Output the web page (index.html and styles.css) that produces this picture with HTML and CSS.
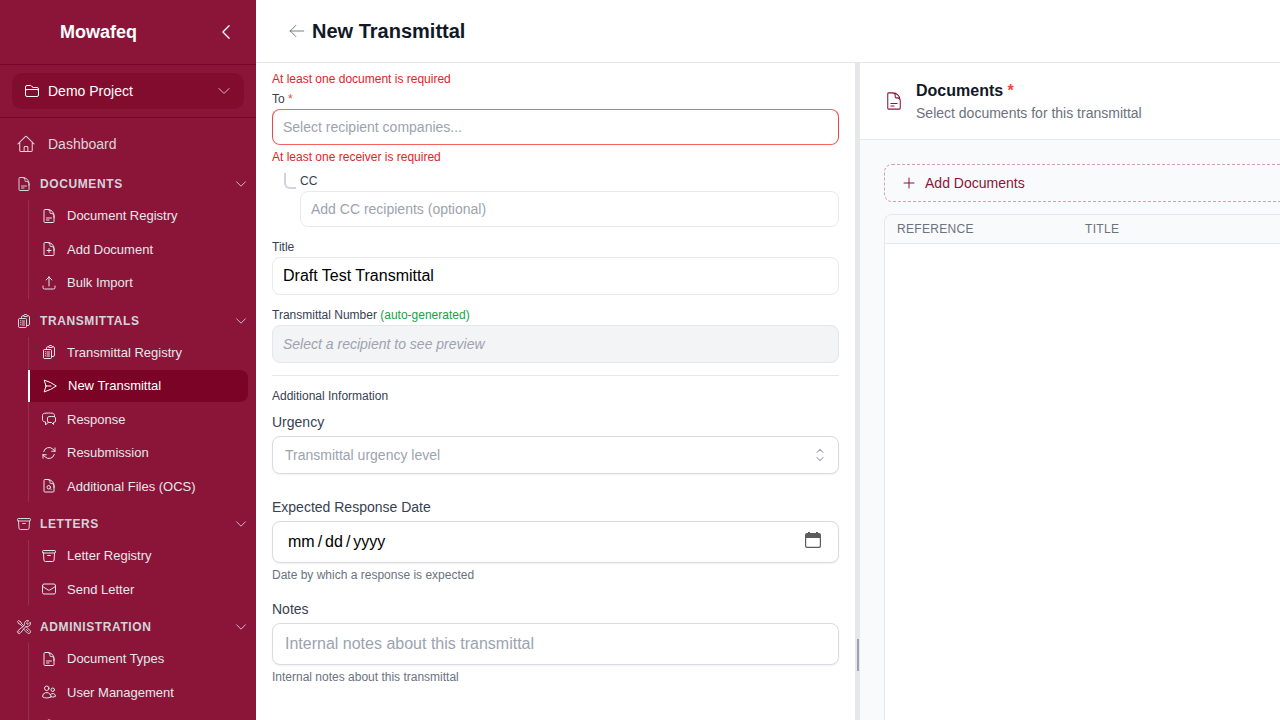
FILE: index.html
```html
<!DOCTYPE html>
<html lang="en">
<head>
<meta charset="utf-8">
<meta name="viewport" content="width=device-width, initial-scale=1">
<title>New Transmittal</title>
<link rel="stylesheet" href="styles.css">
</head>
<body>
<svg class="sprite" aria-hidden="true">
  <symbol id="chevron-left" viewBox="0 0 24 24"><path d="M15.75 19.5 8.25 12l7.5-7.5"/></symbol>
  <symbol id="chevron-down" viewBox="0 0 24 24"><path d="m19.5 8.25-7.5 7.5-7.5-7.5"/></symbol>
  <symbol id="chevron-up-down" viewBox="0 0 24 24"><path d="M8.25 15 12 18.75 15.75 15m-7.5-6L12 5.25 15.75 9"/></symbol>
  <symbol id="arrow-left" viewBox="0 0 24 24"><path d="M10.5 19.5 3 12m0 0 7.5-7.5M3 12h18"/></symbol>
  <symbol id="plus" viewBox="0 0 24 24"><path d="M12 4.5v15m7.5-7.5h-15"/></symbol>
  <symbol id="folder" viewBox="0 0 24 24"><path d="M2.25 12.75V12A2.25 2.25 0 0 1 4.5 9.75h15A2.25 2.25 0 0 1 21.75 12v.75m-8.69-6.44-2.12-2.12a1.5 1.5 0 0 0-1.061-.44H4.5A2.25 2.25 0 0 0 2.25 6v12a2.25 2.25 0 0 0 2.25 2.25h15A2.25 2.25 0 0 0 21.75 18V9a2.25 2.25 0 0 0-2.25-2.25h-5.379a1.5 1.5 0 0 1-1.06-.44Z"/></symbol>
  <symbol id="home" viewBox="0 0 24 24"><path d="m2.25 12 8.954-8.955c.44-.439 1.152-.439 1.591 0L21.75 12M4.5 9.75v10.125c0 .621.504 1.125 1.125 1.125H9.75v-4.875c0-.621.504-1.125 1.125-1.125h2.25c.621 0 1.125.504 1.125 1.125V21h4.125c.621 0 1.125-.504 1.125-1.125V9.75M8.25 21h8.25"/></symbol>
  <symbol id="document-text" viewBox="0 0 24 24"><path d="M19.5 14.25v-2.625a3.375 3.375 0 0 0-3.375-3.375h-1.5A1.125 1.125 0 0 1 13.5 7.125v-1.5a3.375 3.375 0 0 0-3.375-3.375H8.25m0 12.75h7.5m-7.5 3H12M10.5 2.25H5.625c-.621 0-1.125.504-1.125 1.125v17.25c0 .621.504 1.125 1.125 1.125h12.75c.621 0 1.125-.504 1.125-1.125V11.25a9 9 0 0 0-9-9Z"/></symbol>
  <symbol id="document-plus" viewBox="0 0 24 24"><path d="M19.5 14.25v-2.625a3.375 3.375 0 0 0-3.375-3.375h-1.5A1.125 1.125 0 0 1 13.5 7.125v-1.5a3.375 3.375 0 0 0-3.375-3.375H8.25m3.75 9v6m3-3H9m1.5-12H5.625c-.621 0-1.125.504-1.125 1.125v17.25c0 .621.504 1.125 1.125 1.125h12.75c.621 0 1.125-.504 1.125-1.125V11.25a9 9 0 0 0-9-9Z"/></symbol>
  <symbol id="document-search" viewBox="0 0 24 24"><path d="M19.5 14.25v-2.625a3.375 3.375 0 0 0-3.375-3.375h-1.5A1.125 1.125 0 0 1 13.5 7.125v-1.5a3.375 3.375 0 0 0-3.375-3.375H8.25m5.231 13.481L15 17.25m-4.5-15H5.625c-.621 0-1.125.504-1.125 1.125v16.5c0 .621.504 1.125 1.125 1.125h12.75c.621 0 1.125-.504 1.125-1.125V11.25a9 9 0 0 0-9-9Zm3.75 11.625a2.625 2.625 0 1 1-5.25 0 2.625 2.625 0 0 1 5.25 0Z"/></symbol>
  <symbol id="arrow-up-tray" viewBox="0 0 24 24"><path d="M3 16.5v2.25A2.25 2.25 0 0 0 5.25 21h13.5A2.25 2.25 0 0 0 21 18.75V16.5m-13.5-9L12 3m0 0 4.5 4.5M12 3v13.5"/></symbol>
  <symbol id="clipboard-list" viewBox="0 0 24 24"><path d="M9 12h3.75M9 15h3.75M9 18h3.75m3 .75H18a2.25 2.25 0 0 0 2.25-2.25V6.108c0-1.135-.845-2.098-1.976-2.192a48.424 48.424 0 0 0-1.123-.08m-5.801 0c-.065.21-.1.433-.1.664 0 .414.336.75.75.75h4.5a.75.75 0 0 0 .75-.75 2.25 2.25 0 0 0-.1-.664m-5.8 0A2.251 2.251 0 0 1 13.5 2.25H15c1.012 0 1.867.668 2.15 1.586m-5.8 0c-.376.023-.75.05-1.124.08C9.095 4.01 8.25 4.973 8.25 6.108V8.25m0 0H4.875c-.621 0-1.125.504-1.125 1.125v11.25c0 .621.504 1.125 1.125 1.125h9.75c.621 0 1.125-.504 1.125-1.125V9.375c0-.621-.504-1.125-1.125-1.125H8.25ZM6.75 12h.008v.008H6.75V12Zm0 3h.008v.008H6.75V15Zm0 3h.008v.008H6.75V18Z"/></symbol>
  <symbol id="paper-airplane" viewBox="0 0 24 24"><path d="M6 12 3.269 3.125A59.769 59.769 0 0 1 21.485 12 59.768 59.768 0 0 1 3.27 20.875L5.999 12Zm0 0h7.5"/></symbol>
  <symbol id="chat" viewBox="0 0 24 24"><path d="M20.25 8.511c.884.284 1.5 1.128 1.5 2.097v4.286c0 1.136-.847 2.1-1.98 2.193-.34.027-.68.052-1.02.072v3.091l-3-3c-1.354 0-2.694-.055-4.02-.163a2.115 2.115 0 0 1-.825-.242m9.345-8.334a2.126 2.126 0 0 0-.476-.095 48.64 48.64 0 0 0-8.048 0c-1.131.094-1.976 1.057-1.976 2.192v4.286c0 .837.46 1.58 1.155 1.951m9.345-8.334V6.637c0-1.621-1.152-3.026-2.76-3.235A48.455 48.455 0 0 0 11.25 3c-2.115 0-4.198.137-6.24.402-1.608.209-2.76 1.614-2.76 3.235v6.226c0 1.621 1.152 3.026 2.76 3.235.577.075 1.157.14 1.74.194V21l4.155-4.155"/></symbol>
  <symbol id="arrow-path" viewBox="0 0 24 24"><path d="M16.023 9.348h4.992v-.001M2.985 19.644v-4.992m0 0h4.992m-4.993 0 3.181 3.183a8.25 8.25 0 0 0 13.803-3.7M4.031 9.865a8.25 8.25 0 0 1 13.803-3.7l3.181 3.182m0-4.991v4.99"/></symbol>
  <symbol id="archive-box" viewBox="0 0 24 24"><path d="m20.25 7.5-.625 10.632a2.25 2.25 0 0 1-2.247 2.118H6.622a2.25 2.25 0 0 1-2.247-2.118L3.75 7.5M10 11.25h4M3.375 7.5h17.25c.621 0 1.125-.504 1.125-1.125v-1.5c0-.621-.504-1.125-1.125-1.125H3.375c-.621 0-1.125.504-1.125 1.125v1.5c0 .621.504 1.125 1.125 1.125Z"/></symbol>
  <symbol id="envelope" viewBox="0 0 24 24"><path d="M21.75 6.75v10.5a2.25 2.25 0 0 1-2.25 2.25h-15a2.25 2.25 0 0 1-2.25-2.25V6.75m19.5 0A2.25 2.25 0 0 0 19.5 4.5h-15a2.25 2.25 0 0 0-2.25 2.25m19.5 0v.243a2.25 2.25 0 0 1-1.07 1.916l-7.5 4.615a2.25 2.25 0 0 1-2.36 0L3.32 8.91a2.25 2.25 0 0 1-1.07-1.916V6.75"/></symbol>
  <symbol id="tools" viewBox="0 0 24 24"><path d="M11.42 15.17 17.25 21A2.652 2.652 0 0 0 21 17.25l-5.877-5.877M11.42 15.17l2.496-3.03c.317-.384.74-.626 1.208-.766M11.42 15.17l-4.655 5.653a2.548 2.548 0 1 1-3.586-3.586l6.837-5.63m5.108-.233c.55-.164 1.163-.188 1.743-.14a4.5 4.5 0 0 0 4.486-6.336l-3.276 3.277a3.004 3.004 0 0 1-2.25-2.25l3.276-3.276a4.5 4.5 0 0 0-6.336 4.486c.091 1.076-.071 2.264-.904 2.95l-.102.085m-1.745 1.437L5.909 7.5H4.5L2.25 3.75l1.5-1.5L7.5 4.5v1.409l4.26 4.26m-1.745 1.437 1.745-1.437m6.615 8.206L15.75 15.75M4.867 19.125h.008v.008h-.008v-.008Z"/></symbol>
  <symbol id="users" viewBox="0 0 24 24"><path d="M15 19.128a9.38 9.38 0 0 0 2.625.372 9.337 9.337 0 0 0 4.121-.952 4.125 4.125 0 0 0-7.533-2.493M15 19.128v-.003c0-1.113-.285-2.16-.786-3.07M15 19.128v.106A12.318 12.318 0 0 1 8.624 21c-2.331 0-4.512-.645-6.374-1.766l-.001-.109a6.375 6.375 0 0 1 11.964-3.07M12 6.375a3.375 3.375 0 1 1-6.75 0 3.375 3.375 0 0 1 6.75 0Zm8.25 2.25a2.625 2.625 0 1 1-5.25 0 2.625 2.625 0 0 1 5.25 0Z"/></symbol>
  <symbol id="cog" viewBox="0 0 24 24"><path d="M9.594 3.94c.09-.542.56-.94 1.11-.94h2.593c.55 0 1.02.398 1.11.94l.213 1.281c.063.374.313.686.645.87.074.04.147.083.22.127.325.196.72.257 1.075.124l1.217-.456a1.125 1.125 0 0 1 1.37.49l1.296 2.247a1.125 1.125 0 0 1-.26 1.431l-1.003.827c-.293.241-.438.613-.43.992a7.723 7.723 0 0 1 0 .255c-.008.378.137.75.43.991l1.004.827c.424.35.534.955.26 1.43l-1.298 2.247a1.125 1.125 0 0 1-1.369.491l-1.217-.456c-.355-.133-.75-.072-1.076.124a6.47 6.47 0 0 1-.22.128c-.331.183-.581.495-.644.869l-.213 1.281c-.09.543-.56.94-1.11.94h-2.594c-.55 0-1.019-.398-1.11-.94l-.213-1.281c-.062-.374-.312-.686-.644-.87a6.52 6.52 0 0 1-.22-.127c-.325-.196-.72-.257-1.076-.124l-1.217.456a1.125 1.125 0 0 1-1.369-.49l-1.297-2.247a1.125 1.125 0 0 1 .26-1.431l1.004-.827c.292-.24.437-.613.43-.991a6.932 6.932 0 0 1 0-.255c.007-.38-.138-.751-.43-.992l-1.004-.827a1.125 1.125 0 0 1-.26-1.43l1.297-2.247a1.125 1.125 0 0 1 1.37-.491l1.216.456c.356.133.751.072 1.076-.124.072-.044.146-.086.22-.128.332-.183.582-.495.644-.869l.214-1.28Z"/></symbol>
</svg>
<div class="app">
  <aside class="sidebar">
    <div class="brand">
      <span class="brand-name">Mowafeq</span>
      <button class="icon-button" type="button" aria-label="Collapse sidebar"><svg class="icon icon-lg"><use href="#chevron-left"/></svg></button>
    </div>
    <div class="project">
      <button class="project-button" type="button">
        <svg class="icon"><use href="#folder"/></svg>
        <span class="grow">Demo Project</span>
        <svg class="icon dim"><use href="#chevron-down"/></svg>
      </button>
    </div>
    <nav class="nav">
      <a class="nav-home" href="#"><svg class="icon icon-lg"><use href="#home"/></svg>Dashboard</a>
      <section class="group">
        <button class="group-title" type="button"><svg class="icon"><use href="#document-text"/></svg><span class="grow">DOCUMENTS</span><svg class="icon icon-sm"><use href="#chevron-down"/></svg></button>
        <ul class="group-list">
          <li><a class="nav-link" href="#"><svg class="icon"><use href="#document-text"/></svg>Document Registry</a></li>
          <li><a class="nav-link" href="#"><svg class="icon"><use href="#document-plus"/></svg>Add Document</a></li>
          <li><a class="nav-link" href="#"><svg class="icon"><use href="#arrow-up-tray"/></svg>Bulk Import</a></li>
        </ul>
      </section>
      <section class="group">
        <button class="group-title" type="button"><svg class="icon"><use href="#clipboard-list"/></svg><span class="grow">TRANSMITTALS</span><svg class="icon icon-sm"><use href="#chevron-down"/></svg></button>
        <ul class="group-list">
          <li><a class="nav-link" href="#"><svg class="icon"><use href="#clipboard-list"/></svg>Transmittal Registry</a></li>
          <li><a class="nav-link active" href="#" aria-current="page"><svg class="icon"><use href="#paper-airplane"/></svg>New Transmittal</a></li>
          <li><a class="nav-link" href="#"><svg class="icon"><use href="#chat"/></svg>Response</a></li>
          <li><a class="nav-link" href="#"><svg class="icon"><use href="#arrow-path"/></svg>Resubmission</a></li>
          <li><a class="nav-link" href="#"><svg class="icon"><use href="#document-search"/></svg>Additional Files (OCS)</a></li>
        </ul>
      </section>
      <section class="group">
        <button class="group-title" type="button"><svg class="icon"><use href="#archive-box"/></svg><span class="grow">LETTERS</span><svg class="icon icon-sm"><use href="#chevron-down"/></svg></button>
        <ul class="group-list">
          <li><a class="nav-link" href="#"><svg class="icon"><use href="#archive-box"/></svg>Letter Registry</a></li>
          <li><a class="nav-link" href="#"><svg class="icon"><use href="#envelope"/></svg>Send Letter</a></li>
        </ul>
      </section>
      <section class="group">
        <button class="group-title" type="button"><svg class="icon"><use href="#tools"/></svg><span class="grow">ADMINISTRATION</span><svg class="icon icon-sm"><use href="#chevron-down"/></svg></button>
        <ul class="group-list">
          <li><a class="nav-link" href="#"><svg class="icon"><use href="#document-text"/></svg>Document Types</a></li>
          <li><a class="nav-link" href="#"><svg class="icon"><use href="#users"/></svg>User Management</a></li>
          <li><a class="nav-link icon-only" href="#" aria-label="Settings"><svg class="icon"><use href="#cog"/></svg></a></li>
        </ul>
      </section>
    </nav>
  </aside>
  <main class="main">
    <header class="page-header">
      <button class="icon-button back" type="button" aria-label="Back"><svg class="icon icon-md"><use href="#arrow-left"/></svg></button>
      <h1 class="page-title">New Transmittal</h1>
    </header>
    <div class="split">
      <form class="form">
        <p class="error">At least one document is required</p>
        <div class="field">
          <label class="label" for="to">To <span class="required">*</span></label>
          <input class="input compact invalid" id="to" type="text" placeholder="Select recipient companies...">
          <p class="error">At least one receiver is required</p>
        </div>
        <div class="cc">
          <span class="connector"></span>
          <label class="label" for="cc">CC</label>
          <input class="input compact cc-input" id="cc" type="text" placeholder="Add CC recipients (optional)">
        </div>
        <div class="field spaced">
          <label class="label" for="title">Title</label>
          <input class="input title-input" id="title" type="text" value="Draft Test Transmittal">
        </div>
        <div class="field spaced">
          <label class="label" for="number">Transmittal Number <span class="auto">(auto-generated)</span></label>
          <input class="input preview" id="number" type="text" placeholder="Select a recipient to see preview" readonly>
        </div>
        <hr class="divider">
        <h2 class="label">Additional Information</h2>
        <div class="extra urgency">
          <label class="extra-label" for="urgency">Urgency</label>
          <div class="control-wrap">
            <select class="control select" id="urgency"><option>Transmittal urgency level</option></select>
            <svg class="icon icon-lg select-icon"><use href="#chevron-up-down"/></svg>
          </div>
        </div>
        <div class="extra">
          <label class="extra-label" for="date">Expected Response Date</label>
          <div class="control-wrap">
            <input class="control date" id="date" type="date">
            <svg class="date-icon" viewBox="0 0 16 16" aria-hidden="true">
              <path d="M3 0h2v2H3zM11 0h2v2h-2z"/>
              <path fill-rule="evenodd" d="M2 1h12a2 2 0 0 1 2 2v11a2 2 0 0 1-2 2H2a2 2 0 0 1-2-2V3a2 2 0 0 1 2-2Zm-.8 5v7.800a1 1 0 0 0 1 1h11.600a1 1 0 0 0 1-1V6Z"/>
            </svg>
          </div>
          <p class="hint">Date by which a response is expected</p>
        </div>
        <div class="extra">
          <label class="extra-label" for="notes">Notes</label>
          <input class="control" id="notes" type="text" placeholder="Internal notes about this transmittal">
          <p class="hint">Internal notes about this transmittal</p>
        </div>
      </form>
      <div class="gutter" role="separator" aria-orientation="vertical"><span class="handle"></span></div>
      <section class="documents">
        <header class="documents-header">
          <svg class="icon icon-lg documents-icon"><use href="#document-text"/></svg>
          <div>
            <h2 class="documents-title">Documents <span class="required">*</span></h2>
            <p class="documents-sub">Select documents for this transmittal</p>
          </div>
        </header>
        <div class="documents-body">
          <button class="add" type="button"><svg class="icon"><use href="#plus"/></svg>Add Documents</button>
          <div class="table-card">
            <table class="table">
              <thead><tr><th class="col-ref">REFERENCE</th><th>TITLE</th></tr></thead>
              <tbody></tbody>
            </table>
          </div>
        </div>
      </section>
    </div>
  </main>
</div>
</body>
</html>
```
FILE: styles.css
```css
*, *::before, *::after { box-sizing: border-box; }
body {
  margin: 0;
  font-family: "Liberation Sans", Arial, sans-serif;
  font-size: 14px;
  line-height: 20px;
  color: #374151;
  background: #fff;
}
h1, h2, p, ul { margin: 0; padding: 0; font-weight: 400; }
ul { list-style: none; }
a { color: inherit; text-decoration: none; }
button, input, select { font: inherit; color: inherit; margin: 0; }
button { border: 0; padding: 0; background: none; text-align: left; cursor: pointer; }

.sprite { display: none; }
.icon {
  width: 16px;
  height: 16px;
  flex: none;
  fill: none;
  stroke: currentColor;
  stroke-width: 1.5;
  stroke-linecap: round;
  stroke-linejoin: round;
}
.icon-sm { width: 14px; height: 14px; }
.icon-md { width: 18px; height: 18px; }
.icon-lg { width: 20px; height: 20px; }
.grow { flex: 1; }
.icon-button { display: flex; }

.app { display: flex; height: 100vh; overflow: hidden; }

/* Sidebar */
.sidebar {
  width: 256px;
  flex: none;
  overflow: hidden;
  background: #8a1538;
  color: #e5e7eb;
}
.brand {
  display: flex;
  align-items: center;
  justify-content: space-between;
  height: 65px;
  padding: 0 20px 0 60px;
  border-bottom: 1px solid #7a0326;
  color: #fff;
}
.brand-name { font-size: 18px; line-height: 28px; font-weight: 700; }
.project { padding: 8px 12px; border-bottom: 1px solid #7a0326; }
.project-button {
  display: flex;
  align-items: center;
  gap: 8px;
  width: 100%;
  padding: 8px 12px;
  border-radius: 10px;
  background: #820c2e;
  color: #fff;
}
.dim { opacity: .7; }
.nav { padding: 8px; }
.nav-home {
  display: flex;
  align-items: center;
  gap: 12px;
  padding: 8px;
  color: #e0d3d9;
}
.nav-home .icon { stroke-width: 1.25; }
.group { margin-top: 8px; }
.group-title {
  display: flex;
  align-items: center;
  gap: 8px;
  width: 100%;
  height: 28px;
  padding-left: 8px;
  font-size: 12px;
  line-height: 16px;
  font-weight: 700;
  letter-spacing: .05em;
  color: #d1d5db;
}
.group-list {
  display: flex;
  flex-direction: column;
  gap: 2px;
  margin: 2px 0 0 20px;
  border-left: 1px solid #96304e;
}
.nav-link {
  display: flex;
  align-items: center;
  gap: 10px;
  padding: 6px 12px;
  font-size: 13px;
  line-height: 1.5;
}
.icon-only { min-height: 32px; }
.nav-link.active {
  margin-left: -1px;
  border-left: 2px solid #fff;
  border-radius: 0 8px 8px 0;
  background: #7a0326;
  color: #fff;
}

/* Main area */
.main { flex: 1; min-width: 0; display: flex; flex-direction: column; }
.page-header {
  display: flex;
  align-items: center;
  height: 63px;
  flex: none;
  gap: 6px;
  padding: 0 32px;
  border-bottom: 1px solid #e5e7eb;
}
.back { color: #4b5563; }
.back .icon { stroke-width: 1; }
.page-title { font-size: 20px; line-height: 28px; font-weight: 700; color: #111827; }
.split { flex: 1; min-height: 0; display: flex; }

/* Form */
.form {
  flex: 0 0 58.5%;
  padding: 8px 16px;
  overflow: hidden;
}
.error { font-size: 12px; line-height: 16px; color: #dc2626; }
.label { display: block; font-size: 12px; line-height: 16px; color: #374151; }
.required { color: #ef4444; }
.auto { color: #16a34a; }
.field { display: flex; flex-direction: column; }
.field .label { margin-bottom: 2px; }
.error + .field { margin-top: 4px; }
.field .error { margin-top: 4px; }
.spaced { margin-top: 12px; }
.input {
  width: 100%;
  height: 38px;
  padding: 0 10px;
  border: 1px solid #e8e9ec;
  border-radius: 8px;
  background: #fff;
}
.compact { height: 36px; }
.title-input { font-size: 16px; color: #000; }
.invalid { border-color: #f26464 #ef4444; }
.input::placeholder, .control::placeholder { color: #9ca3af; opacity: 1; }
.preview { border-color: #e5e7eb; background: #f3f4f6; font-style: italic; }
.cc {
  display: grid;
  grid-template-columns: 12px 1fr;
  column-gap: 4px;
  row-gap: 2px;
  margin-top: 8px;
  padding-left: 12px;
}
.connector {
  border: solid #d1d5db;
  border-width: 0 0 2px 2px;
  border-bottom-left-radius: 6px;
}
.cc-input { grid-column: 2; }
.divider { margin: 12px 0; border: 0; height: 1px; background: #e5e7eb; }
.extra { margin-top: 16px; }
.urgency { margin: 8px 0 23px; }
.extra-label { display: block; margin-bottom: 4px; }
.control {
  display: block;
  width: 100%;
  height: 42px;
  padding: 8px 12px;
  border: 1px solid #d8dbe1;
  border-radius: 8px;
  background: #fff;
  box-shadow: 0 1px 2px rgba(0, 0, 0, .06);
  font-size: 16px;
  line-height: 24px;
  color: #000;
}
.control-wrap { position: relative; }
.select {
  appearance: none;
  height: 38px;
  font-size: 14px;
  line-height: 20px;
  color: #9ca3af;
}
.select-icon {
  position: absolute;
  right: 9px;
  top: 9px;
  stroke-width: 1.25;
  color: #9ca3af;
  pointer-events: none;
}
.date { padding-left: 14px; }
.date::-webkit-datetime-edit-text { padding: 0 2px; }
.date::-webkit-calendar-picker-indicator { opacity: 0; }
.date-icon {
  position: absolute;
  right: 18px;
  top: 11px;
  width: 16px;
  height: 16px;
  fill: #5c5c5c;
  pointer-events: none;
}
.hint { margin-top: 4px; font-size: 12px; line-height: 16px; color: #6b7280; }

/* Resizable divider */
.gutter { position: relative; width: 5px; flex: none; background: #e5e7eb; }
.handle { position: absolute; left: 2px; top: 576px; width: 2px; height: 32px; background: #9ca3af; }

/* Documents panel */
.documents {
  flex: 1;
  min-width: 0;
  overflow: hidden;
  display: flex;
  flex-direction: column;
  background: #f9fafb;
}
.documents-header {
  display: flex;
  align-items: center;
  gap: 12px;
  padding: 16px 24px;
  border-bottom: 1px solid #e5e7eb;
  background: #fff;
  color: #8a1538;
}
.documents-icon { stroke-width: 1.25; }
.documents-title { font-size: 16px; line-height: 24px; font-weight: 700; color: #111827; }
.documents-sub { color: #6b7280; }
.documents-body {
  flex: 1;
  display: flex;
  flex-direction: column;
  gap: 12px;
  min-width: 640px;
  padding: 24px 24px 0;
}
.add {
  display: flex;
  align-items: center;
  gap: 8px;
  height: 38px;
  padding: 0 16px;
  border: 1px dashed #d0a1af;
  border-radius: 8px;
  color: #8a1538;
}
.table-card {
  flex: 1;
  border: 1px solid #e5e7eb;
  border-bottom: 0;
  border-radius: 8px 8px 0 0;
  background: #fff;
  overflow: hidden;
}
.table { width: 100%; border-collapse: collapse; table-layout: fixed; }
.table th {
  padding: 6px 12px;
  border-bottom: 1px solid #e5e7eb;
  background: #f9fafb;
  font-size: 12px;
  line-height: 16px;
  font-weight: 400;
  letter-spacing: .025em;
  text-align: left;
  color: #6b7280;
}
.table .col-ref { width: 188px; }
```
